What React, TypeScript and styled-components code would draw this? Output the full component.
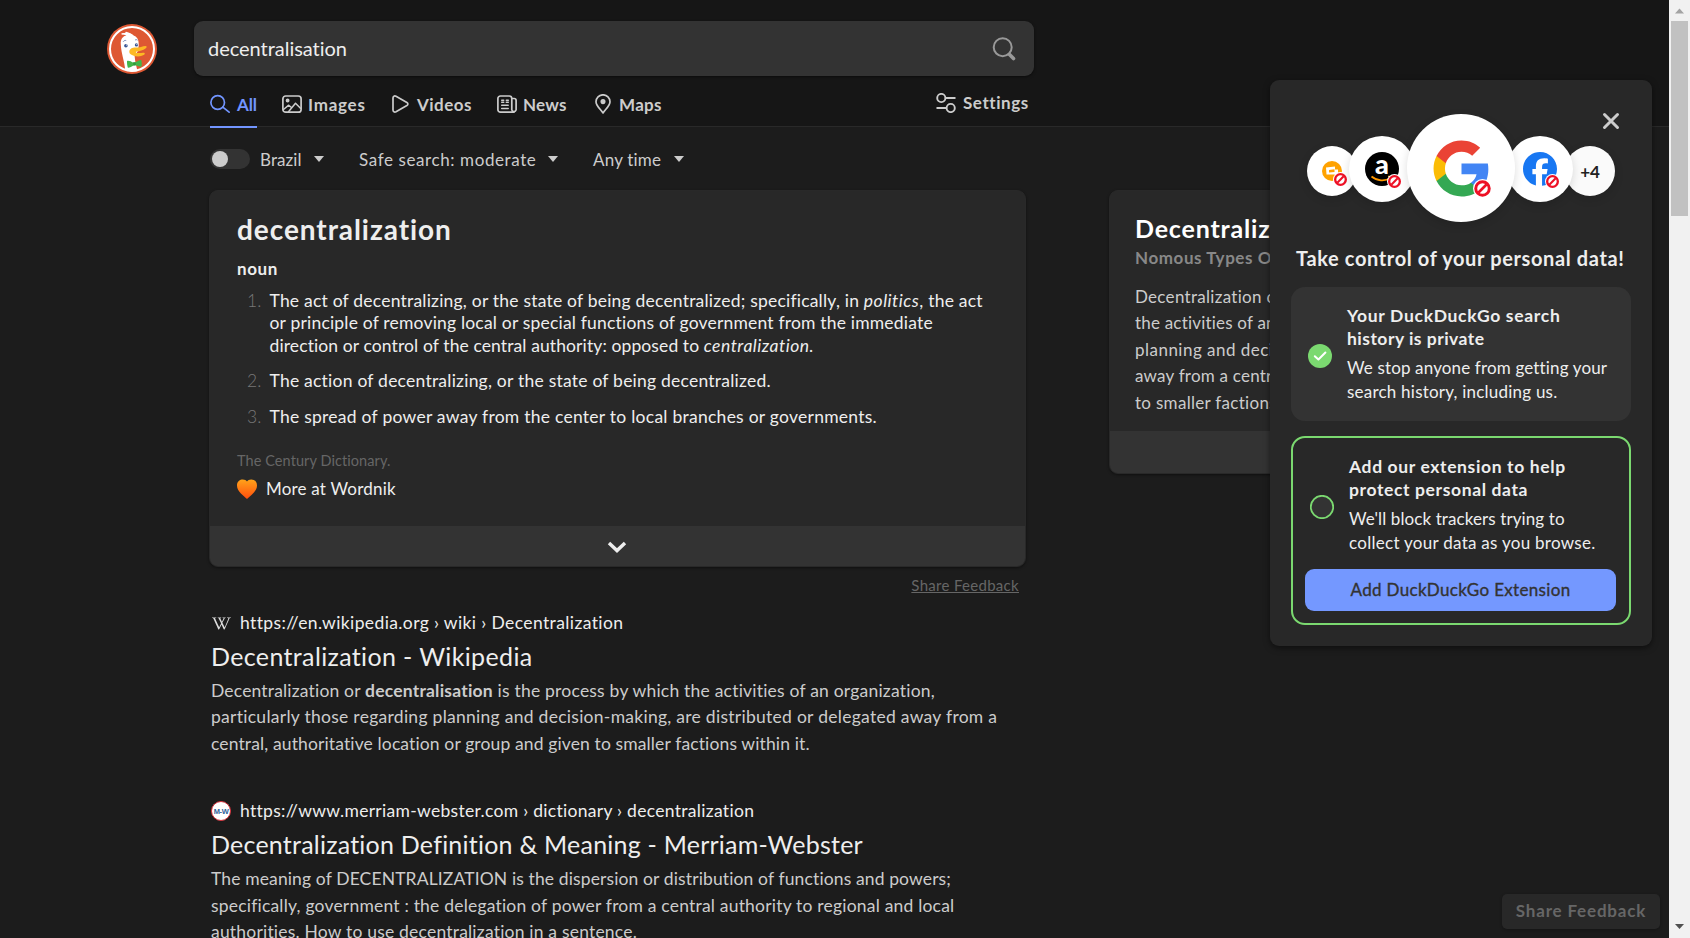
import React from "react";
import styled, { createGlobalStyle } from "styled-components";
import { FaFacebook } from "react-icons/fa6";
import { SiWikipedia } from "react-icons/si";

const GlobalStyle = createGlobalStyle`
  * { box-sizing: border-box; }
  body { margin: 0; background: #1c1c1c; overflow: hidden; }
  h1, h2, h3, p, ol { margin: 0; padding: 0; font-weight: inherit; }
`;

const Window = styled.div`
  display: grid;
  grid-template-columns: 1669px 21px;
  height: 938px;
  overflow: hidden;
  font-family: Lato, "Liberation Sans", sans-serif;
  color: #eee;
`;

const Page = styled.div`
  position: relative;
  height: 938px;
  overflow: hidden;
  background: #1c1c1c;
`;

const Line = styled.span<{ $ls?: number }>`
  display: block;
  white-space: nowrap;
  letter-spacing: ${(p) => p.$ls ?? 0}px;
  i { letter-spacing: 0.5px; }
`;

const Run = styled.span<{ $ls: number }>`
  letter-spacing: ${(p) => p.$ls}px;
`;

/* ---------- header ---------- */

const Header = styled.header`
  display: flex;
  height: 127px;
  padding-left: 107px;
  background: #161616;
  border-bottom: 1px solid #292929;
`;

const Logo = styled.div`
  width: 50px;
  height: 50px;
  margin-top: 24px;
  svg { display: block; }
`;

const HeaderMain = styled.div`
  width: 840px;
  margin-left: 37px;
  padding-top: 21px;
`;

const SearchBox = styled.div`
  display: flex;
  align-items: center;
  justify-content: space-between;
  height: 55px;
  padding: 0 18px 0 14px;
  border-radius: 9px;
  background: #333;
  box-shadow: 0 1px 3px rgba(0, 0, 0, 0.5);
  font-size: 20px;
  line-height: 24px;
  > span { margin-top: -2px; }
`;

const NavRow = styled.div`
  display: flex;
  justify-content: space-between;
  height: 50px;
  padding: 0 5px 0 16px;
`;

const Tabs = styled.nav`
  display: grid;
  grid-template-columns: 72px 110px 105px 98px 80px;
`;

const Tab = styled.a<{ $active?: boolean; $gap: number; $ls: number }>`
  position: relative;
  display: flex;
  align-items: flex-start;
  gap: ${(p) => p.$gap}px;
  padding-top: 18px;
  font-size: 17px;
  font-weight: 700;
  line-height: 21px;
  letter-spacing: ${(p) => p.$ls}px;
  color: ${(p) => (p.$active ? "#7295ff" : "#ccc")};
  svg { display: block; flex: none; }
  ${(p) => p.$active && `
    &::after {
      content: "";
      position: absolute;
      left: 0;
      bottom: -2px;
      width: 47px;
      height: 2px;
      background: #7295ff;
    }
  `}
`;

const Settings = styled.a`
  display: flex;
  gap: 7px;
  width: 93px;
  padding-top: 17px;
  font-size: 17px;
  font-weight: 700;
  line-height: 20px;
  letter-spacing: 0.56px;
  color: #ccc;
  svg { display: block; flex: none; }
`;

/* ---------- filters ---------- */

const Filters = styled.div`
  display: flex;
  align-items: center;
  height: 63px;
  padding: 3px 0 0 210px;
  font-size: 17px;
  line-height: 22px;
  color: #ccc;
`;

const Toggle = styled.span`
  width: 40px;
  height: 20px;
  margin: -3px 10px 0 0;
  padding: 2px;
  border-radius: 10px;
  background: #333;
  &::before {
    content: "";
    display: block;
    width: 16px;
    height: 16px;
    border-radius: 50%;
    background: #ccc;
  }
`;

const Filter = styled.span<{ $width: number; $ls: number }>`
  display: flex;
  justify-content: space-between;
  align-items: center;
  width: ${(p) => p.$width}px;
  letter-spacing: ${(p) => p.$ls}px;
  white-space: nowrap;
  &::after {
    content: "";
    margin-top: -2px;
    border: 4.5px solid transparent;
    border-width: 6px 5px 0;
    border-top-color: #ccc;
  }
  & + & { margin-left: 35px; }
`;

/* ---------- columns and cards ---------- */

const Columns = styled.div`
  display: flex;
  align-items: flex-start;
  padding-left: 209px;
`;

const MainColumn = styled.main`
  width: 817px;
`;

const SideColumn = styled.aside`
  margin-left: 83px;
`;

const Card = styled.section<{ $width: number; $height: number }>`
  display: flex;
  flex-direction: column;
  width: ${(p) => p.$width}px;
  height: ${(p) => p.$height}px;
  border: 1px solid #292929;
  border-radius: 9px;
  background: #282828;
  box-shadow: 0 1px 3px rgba(0, 0, 0, 0.45);
  overflow: hidden;
`;

const CardBar = styled.div<{ $height: number }>`
  display: flex;
  align-items: center;
  justify-content: center;
  height: ${(p) => p.$height}px;
  margin-top: auto;
  padding: 2px 1px 0 0;
  background: #333;
`;

const Definition = styled.div`
  padding: 21px 0 0 27px;
  font-size: 17.5px;
  h1 {
    font-size: 28px;
    font-weight: 700;
    line-height: 34px;
    letter-spacing: 0.93px;
  }
  h3 {
    margin-top: 12px;
    font-size: 17px;
    font-weight: 700;
    line-height: 22px;
    letter-spacing: 0.6px;
  }
`;

const Senses = styled.ol`
  margin-top: 10px;
  list-style: none;
  line-height: 22.4px;
`;

const Sense = styled.li`
  display: grid;
  grid-template-columns: 22.5px 1fr;
  padding-left: 10px;
  margin-bottom: 13.2px;
`;

const Num = styled.span`
  font-weight: 300;
  color: #777;
`;

const Attribution = styled.p`
  margin-top: 23px;
  font-size: 14.5px;
  line-height: 20px;
  letter-spacing: 0.08px;
  color: #666;
`;

const MoreLink = styled.a`
  display: flex;
  align-items: center;
  gap: 9px;
  margin-top: 7px;
  font-size: 17px;
  line-height: 22px;
  letter-spacing: 0.2px;
  svg { display: block; margin-top: -1px; }
`;

const InlineFeedback = styled.a`
  display: block;
  margin: 9px 7px 0 0;
  font-size: 15px;
  line-height: 19px;
  letter-spacing: 0.3px;
  text-align: right;
  text-decoration: underline;
  text-underline-offset: 1px;
  color: #666;
`;

const SideTopic = styled.div`
  padding: 22px 0 0 25px;
  h2 {
    font-size: 25px;
    font-weight: 700;
    line-height: 30px;
    letter-spacing: 0.82px;
    color: #fff;
  }
  h3 {
    margin-top: 4px;
    font-size: 17px;
    font-weight: 700;
    line-height: 22px;
    letter-spacing: 0.57px;
    color: #888;
  }
  p {
    margin-top: 15px;
    font-size: 17px;
    line-height: 26.4px;
    color: #ccc;
  }
`;

/* ---------- results ---------- */

const Result = styled.article<{ $top: number }>`
  margin-top: ${(p) => p.$top}px;
  padding-left: 2px;
  h2 {
    margin-top: 6px;
    font-size: 25px;
    line-height: 32px;
    color: #eee;
  }
  p {
    margin-top: 6px;
    font-size: 17.5px;
    line-height: 26.4px;
    color: #ccc;
  }
`;

const Url = styled.div`
  display: flex;
  align-items: center;
  gap: 9px;
  height: 22px;
  font-size: 17.5px;
  line-height: 22px;
`;

const Favicon = styled.span`
  display: flex;
  align-items: center;
  justify-content: center;
  width: 20px;
  height: 20px;
`;

const MerriamIcon = styled(Favicon)`
  border: 1.5px solid #d8303a;
  border-radius: 50%;
  background: #fff;
  font: 700 7.5px "Liberation Sans", sans-serif;
  letter-spacing: -0.4px;
  color: #2f6299;
`;

/* ---------- privacy popup ---------- */

const Popup = styled.aside`
  position: absolute;
  left: 1270px;
  top: 80px;
  width: 382px;
  height: 566px;
  padding: 34px 21px 0;
  border-radius: 9px;
  background: #282828;
  box-shadow: 0 2px 6px rgba(0, 0, 0, 0.5);
`;

const Close = styled.button`
  position: absolute;
  right: 32px;
  top: 32px;
  padding: 0;
  border: 0;
  background: none;
  svg { display: block; }
`;

const Trackers = styled.div`
  display: flex;
  align-items: center;
  justify-content: center;
  height: 108px;
`;

const Bubble = styled.div<{ $size: number; $lap: number; $z: number; $drop: number }>`
  position: relative;
  z-index: ${(p) => p.$z};
  display: flex;
  align-items: center;
  justify-content: center;
  flex: none;
  width: ${(p) => p.$size}px;
  height: ${(p) => p.$size}px;
  margin: ${(p) => p.$drop}px ${(p) => p.$lap}px 0 0;
  border-radius: 50%;
  background: ${(p) => (p.$z ? "#fff" : "#fafafa")};
  box-shadow: 0 3px 10px rgba(0, 0, 0, 0.14);
  font-size: 17px;
  font-weight: 700;
  color: #222;
  > svg { display: block; flex: none; }
`;

const Blocked = styled.span<{ $size: number; $x: number; $y: number }>`
  position: absolute;
  left: ${(p) => p.$x}px;
  top: ${(p) => p.$y}px;
  width: ${(p) => p.$size}px;
  height: ${(p) => p.$size}px;
  svg { display: block; width: 100%; height: 100%; }
`;

const PopupTitle = styled.h2`
  margin: 22px -10px 0;
  padding-left: 15px;
  font-size: 20px;
  font-weight: 700;
  line-height: 28px;
  letter-spacing: 0.63px;
  white-space: nowrap;
`;

const Step = styled.div<{ $outlined?: boolean }>`
  height: ${(p) => (p.$outlined ? 189 : 134)}px;
  margin-top: 15px;
  border-radius: 14px;
  border: ${(p) => (p.$outlined ? "2px solid #7bd970" : "0")};
  background: ${(p) => (p.$outlined ? "transparent" : "#333")};
  padding: 0 ${(p) => (p.$outlined ? 13 : 0)}px;
`;

const StepBody = styled.div<{ $pad: number; $left: number }>`
  display: flex;
  align-items: center;
  gap: 15px;
  padding: ${(p) => p.$pad}px 0 0 ${(p) => p.$left}px;
  font-size: 17px;
  line-height: 24px;
  svg { display: block; flex: none; margin-top: 3px; }
  h3 { font-size: 17.5px; font-weight: 700; line-height: 23.4px; margin-bottom: 5.2px; }
`;

const AddButton = styled.button`
  display: block;
  width: 311px;
  height: 42px;
  margin: 14px 0 0 -1px;
  padding: 0 0 2px;
  border: 0;
  border-radius: 9px;
  background: #7498ff;
  font: 400 17px Lato, sans-serif;
  -webkit-text-stroke: 0.35px #333;
  letter-spacing: 0.33px;
  color: #333;
`;

const FeedbackButton = styled.button`
  position: absolute;
  left: 1502px;
  top: 894px;
  width: 158px;
  height: 35px;
  padding: 0 0 2px;
  border: 0;
  border-radius: 5px;
  background: #282828;
  box-shadow: 0 1px 3px rgba(0, 0, 0, 0.3);
  font: 700 17px Lato, sans-serif;
  letter-spacing: 0.82px;
  color: #666;
`;

/* ---------- scrollbar ---------- */

const Scrollbar = styled.div`
  display: flex;
  flex-direction: column;
  align-items: center;
  height: 938px;
  background: #f1f1f1;
  svg { display: block; }
`;

const Thumb = styled.div`
  width: 17px;
  height: 195px;
  margin-bottom: auto;
  background: #c1c1c1;
`;

/* ---------- drawings ---------- */

const Duck = () => (
  <svg width="50" height="50" viewBox="0 0 50 50">
    <circle cx="25" cy="25" r="25" fill="#de5833" />
    <circle cx="25" cy="25" r="22" fill="none" stroke="#fff" strokeWidth="2" />
    <path d="M13.8 20.5C13.4 15 16 12.2 19.4 11.6c-1.400-.9-3-1.200-4.600-1C17 7.600 24.400 8.600 27 11.800c3.800 1.300 5 5 4.700 9.700L31 27l-3.400 5 .9 7 2 8c-4.200 1.200-9 .6-12.300-1.200-.8-9-4-16.300-4.400-25.300z" fill="#fff" />
    <path d="M15 9.800c2.500-.4 5 .5 7 2M19 8.400c2 .3 4 1.300 5.400 2.600" fill="none" stroke="#fff" strokeWidth="1.300" strokeLinecap="round" />
    <path d="M22.300 28c0-3 2.700-4.400 6.500-4.400 4 0 6.700-1.600 9.700-1.700 1.700 0 1.400 1.600 0 2.600-2.300 1.700-6 2.900-8.600 3.100-1.500.2-1.200 1.200.2 1.400 2.600.4 4.600-.5 6.700-.3 1.500.2 1.200 1.600-.2 2.400-2.600 1.600-6.800 1.800-9.900.6-2.400-.9-4.400-1.700-4.400-3.700z" fill="#fdb924" />
    <circle cx="18.900" cy="21.700" r="1.800" fill="#3a5795" />
    <circle cx="29.400" cy="20.900" r="1.600" fill="#3a5795" />
    <circle cx="19.500" cy="21.100" r=".5" fill="#fff" />
    <circle cx="29.900" cy="20.400" r=".5" fill="#fff" />
    <path d="M16.200 17.700c.8-1.200 2-1.500 3-1.100M28 16.200c.8-.7 1.700-.7 2.500-.1" fill="none" stroke="#6277ab" strokeWidth=".9" />
    <path d="M20 37c2-.6 4.300.6 6 1.600l2.500-.3c2-1.500 4.400-2.600 5.700-2.300.7 1.800.7 5 .3 6.700-1.700.1-4-.8-5.600-1.500l-2.500.3c-1.600 1.200-4 2.400-5.500 2.200-.8-2-1-4.700-.9-6.700z" fill="#43b649" />
    <path d="M26 38.600l2.500-.3.400 2.900-2.500.3z" fill="#2f9a3a" />
  </svg>
);

const GoogleMark = () => (
  <svg width="61" height="61" viewBox="0 0 24 24">
    <path fill="#4285f4" d="M22.560 12.250c0-.78-.07-1.530-.2-2.250H12v4.260h5.920c-.26 1.370-1.040 2.530-2.210 3.310v2.770h3.570c2.080-1.920 3.280-4.740 3.280-8.090z" />
    <path fill="#34a853" d="M12 23c2.970 0 5.460-.98 7.280-2.660l-3.570-2.770c-.98.66-2.230 1.060-3.710 1.060-2.860 0-5.290-1.930-6.160-4.530H2.180v2.840C3.990 20.530 7.700 23 12 23z" />
    <path fill="#fbbc05" d="M5.840 14.090c-.22-.66-.35-1.360-.35-2.090s.13-1.430.35-2.090V7.070H2.180C1.430 8.550 1 10.220 1 12s.43 3.450 1.180 4.930l3.660-2.840z" />
    <path fill="#ea4335" d="M12 5.380c1.620 0 3.060.56 4.210 1.640l3.150-3.150C17.450 2.090 14.970 1 12 1 7.700 1 3.990 3.470 2.180 7.070l3.660 2.840c.87-2.600 3.300-4.530 6.160-4.530z" />
  </svg>
);

const line = { fill: "none", stroke: "currentColor", strokeWidth: 1.7, strokeLinecap: "round", strokeLinejoin: "round" } as const;

const AllIcon = () => (
  <svg width="20" height="20" viewBox="0 0 20 20" {...line}>
    <circle cx="7.700" cy="8.500" r="6.800" />
    <path d="M12.800 13.200l6.300 5" />
  </svg>
);

const ImagesIcon = () => (
  <svg width="20" height="20" viewBox="0 0 20 20" {...line}>
    <rect x=".9" y="2" width="18.200" height="16.200" rx="2.800" />
    <circle cx="5.600" cy="6.500" r="1.100" fill="currentColor" />
    <path d="M1.500 15.500l5.200-4.300 3 2.600M6.700 17.500l6.800-8.300 5 5" strokeWidth="1.500" />
  </svg>
);

const VideosIcon = () => (
  <svg width="17" height="20" viewBox="0 0 17 20" {...line}>
    <path d="M1 4v12c0 1.700 1.500 2.500 3 1.700l10.900-6.200c1.300-.8 1.300-2.200 0-3L4 2.300C2.500 1.500 1 2.300 1 4z" />
  </svg>
);

const NewsIcon = () => (
  <svg width="20" height="20" viewBox="0 0 20 20" {...line}>
    <path d="M17 18.200H3.400A2.500 2.500 0 0 1 .9 15.700V4.500A2.500 2.500 0 0 1 3.400 2h8.900a2.500 2.500 0 0 1 2.500 2.500v11.400a2.200 2.200 0 0 0 4.300 0V6.500a2 2 0 0 0-2-2h-1.600" />
    <path d="M4.700 6.200h2M4.700 8.300h2M9.300 6.200h2M9.300 8.300h2M4.700 11.300h6.500M4.700 14.400h6.500" strokeWidth="1.500" />
  </svg>
);

const MapsIcon = () => (
  <svg width="16" height="20" viewBox="0 0 16 20" {...line}>
    <path d="M8 18.900C5.500 15.200 1 11.800 1 7.700a7 6.900 0 0 1 14 0c0 4.100-4.500 7.500-7 11.200z" />
    <circle cx="8" cy="7.600" r="1.700" fill="currentColor" />
  </svg>
);

const SettingsIcon = () => (
  <svg width="20" height="20" viewBox="0 0 20 20" {...line} strokeWidth={1.9}>
    <circle cx="5.300" cy="5" r="4.100" />
    <path d="M9.800 5h9M1.200 15h8.500" />
    <circle cx="14.700" cy="15" r="4.100" />
  </svg>
);

const SearchIcon = () => (
  <svg width="24" height="24" viewBox="0 0 24 24" fill="none" stroke="#999" strokeLinecap="round">
    <circle cx="10.700" cy="10.200" r="9" strokeWidth="2" />
    <path d="M17.500 17.500l4 4" strokeWidth="3.600" />
  </svg>
);

const NoSign = () => (
  <svg viewBox="0 0 18 18">
    <circle cx="9" cy="9" r="9" fill="#fff" />
    <circle cx="9" cy="9" r="6.400" fill="#fff" stroke="#ee1025" strokeWidth="2.800" />
    <path d="M5.200 12.800l7.600-7.600" stroke="#ee1025" strokeWidth="2.500" />
  </svg>
);

const AmazonMark = styled.span`
  display: flex;
  flex-direction: column;
  align-items: center;
  width: 34px;
  height: 34px;
  border-radius: 50%;
  background: #000;
  font: 900 27px Lato, sans-serif;
  line-height: 24px;
  color: #fff;
  svg { display: block; margin-top: -1px; }
`;

const Triangle = ({ up, color }: { up?: boolean; color: string }) => (
  <svg width="21" height="21" viewBox="0 0 21 21">
    <path d={up ? "M6 13.500h9l-4.500-5z" : "M6 7h9l-4.500 5z"} fill={color} />
  </svg>
);

export default function App() {
  return (
    <Window>
      <GlobalStyle />
      <Page>
        <Header>
          <Logo><Duck /></Logo>
          <HeaderMain>
            <SearchBox><Run $ls={-0.03}>decentralisation</Run><SearchIcon /></SearchBox>
            <NavRow>
              <Tabs>
                <Tab $active $gap={7} $ls={-0.1}><AllIcon />All</Tab>
                <Tab $gap={6} $ls={0.74}><ImagesIcon />Images</Tab>
                <Tab $gap={8} $ls={0.47}><VideosIcon />Videos</Tab>
                <Tab $gap={6} $ls={0.2}><NewsIcon />News</Tab>
                <Tab $gap={8} $ls={0.3}><MapsIcon />Maps</Tab>
              </Tabs>
              <Settings><SettingsIcon />Settings</Settings>
            </NavRow>
          </HeaderMain>
        </Header>

        <Filters>
          <Toggle />
          <Filter $width={64} $ls={0.08}>Brazil</Filter>
          <Filter $width={199} $ls={0.6}>Safe search: moderate</Filter>
          <Filter $width={91} $ls={0.2}>Any time</Filter>
        </Filters>

        <Columns>
          <MainColumn>
            <Card $width={817} $height={377}>
              <Definition>
                <h1>decentralization</h1>
                <h3>noun</h3>
                <Senses>
                  <Sense>
                    <Num>1.</Num>
                    <div>
                      <Line $ls={0.21}>The act of decentralizing, or the state of being decentralized; specifically, in <i>politics</i>, the act</Line>
                      <Line $ls={0.19}>or principle of removing local or special functions of government from the immediate</Line>
                      <Line $ls={0.105}>direction or control of the central authority: opposed to <i>centralization.</i></Line>
                    </div>
                  </Sense>
                  <Sense><Num>2.</Num><Line $ls={0.23}>The action of decentralizing, or the state of being decentralized.</Line></Sense>
                  <Sense><Num>3.</Num><Line $ls={0.256}>The spread of power away from the center to local branches or governments.</Line></Sense>
                </Senses>
                <Attribution>The Century Dictionary.</Attribution>
                <MoreLink>
                  <svg width="20" height="20" viewBox="0 0 20 20">
                    <defs>
                      <linearGradient id="heart" x1="0" y1="0" x2="0" y2="1">
                        <stop offset="0" stopColor="#ffa31a" />
                        <stop offset="1" stopColor="#ff4d0d" />
                      </linearGradient>
                    </defs>
                    <path d="M10 2.500C8.500-.6 0-.8 0 6.500c0 6 6.500 10 10 13.500 3.500-3.500 10-7.500 10-13.500C20-.8 11.500-.6 10 2.500z" fill="url(#heart)" />
                  </svg>
                  More at Wordnik
                </MoreLink>
              </Definition>
              <CardBar $height={40}>
                <svg width="20" height="14" viewBox="0 0 20 14" fill="none" stroke="#eee" strokeWidth="3.400">
                  <path d="M2 3l8 7.600L18 3" />
                </svg>
              </CardBar>
            </Card>
            <InlineFeedback>Share Feedback</InlineFeedback>

            <Result $top={17}>
              <Url>
                <Favicon><SiWikipedia size={19} color="#ddd" /></Favicon>
                <Line $ls={0.386}>https://en.wikipedia.org › wiki › Decentralization</Line>
              </Url>
              <h2><Line $ls={0.36}>Decentralization - Wikipedia</Line></h2>
              <p>
                <Line $ls={0.21}><Run $ls={0.17}>Decentralization or </Run><b>decentralisation</b> is the process by which the activities of an organization,</Line>
                <Line $ls={0.276}>particularly those regarding planning and decision-making, are distributed or delegated away from a</Line>
                <Line $ls={0.126}>central, authoritative location or group and given to smaller factions within it.</Line>
              </p>
            </Result>

            <Result $top={43}>
              <Url>
                <MerriamIcon>M-W</MerriamIcon>
                <Line $ls={0.3}>https://www.merriam-webster.com › dictionary › decentralization</Line>
              </Url>
              <h2><Line $ls={0.225}>Decentralization Definition &amp; Meaning - Merriam-Webster</Line></h2>
              <p>
                <Line $ls={0.125}>The meaning of DECENTRALIZATION is the dispersion or distribution of functions and powers;</Line>
                <Line $ls={0.197}>specifically, government : the delegation of power from a central authority to regional and local</Line>
                <Line $ls={0.2}>authorities. How to use decentralization in a sentence.</Line>
              </p>
            </Result>
          </MainColumn>

          <SideColumn>
            <Card $width={391} $height={284}>
              <SideTopic>
                <h2>Decentralization</h2>
                <h3>Nomous Types Of</h3>
                <p>
                  <Line $ls={0.29}>Decentralization or</Line>
                  <Line $ls={0.2}>the activities of an</Line>
                  <Line $ls={0.48}>planning and decision</Line>
                  <Line $ls={0.22}>away from a central,</Line>
                  <Line $ls={0.3}>to smaller factions</Line>
                </p>
              </SideTopic>
              <CardBar $height={42} />
            </Card>
          </SideColumn>
        </Columns>

        <Popup>
          <Close aria-label="Close">
            <svg width="18" height="18" viewBox="0 0 18 18" stroke="#ccc" strokeWidth="3" strokeLinecap="round">
              <path d="M2.500 2.500l13 13M15.500 2.500l-13 13" />
            </svg>
          </Close>
          <Trackers>
            <Bubble $size={50} $lap={-8} $z={1} $drop={6}>
              <svg width="20" height="20" viewBox="0 0 20 20">
                <circle cx="10" cy="10" r="10" fill="#ffa200" />
                <path d="M4 6.500l9-1v3h3v5H4.500z" fill="#fff" />
                <path d="M7 9l5.500-.7v2.600L7 11.500z" fill="#ffa200" />
              </svg>
              <Blocked $size={15} $x={26} $y={26}><NoSign /></Blocked>
            </Bubble>
            <Bubble $size={66} $lap={-8} $z={2} $drop={2}>
              <AmazonMark>
                a
                <svg width="24" height="8" viewBox="0 0 24 8" fill="none" stroke="#ff9900" strokeWidth="1.700">
                  <path d="M1.500 1.500c5.500 4.600 13.500 5 19 1.500M18 1.500l4 0-1.300 4" />
                </svg>
              </AmazonMark>
              <Blocked $size={15} $x={38} $y={38}><NoSign /></Blocked>
            </Bubble>
            <Bubble $size={108} $lap={-8} $z={3} $drop={0}>
              <GoogleMark />
              <Blocked $size={19} $x={65.5} $y={65}><NoSign /></Blocked>
            </Bubble>
            <Bubble $size={66} $lap={-8} $z={2} $drop={2}>
              <FaFacebook size={34} color="#1877f2" />
              <Blocked $size={15} $x={38} $y={38}><NoSign /></Blocked>
            </Bubble>
            <Bubble $size={50} $lap={0} $z={0} $drop={6}>+4</Bubble>
          </Trackers>
          <PopupTitle>Take control of your personal data!</PopupTitle>
          <Step>
            <StepBody $pad={17} $left={17}>
              <svg width="24" height="24" viewBox="0 0 24 24">
                <circle cx="12" cy="12" r="12" fill="#7bd970" />
                <path d="M6.800 12.200l3.600 3.300 7-7" fill="none" stroke="#fff" strokeWidth="2" strokeLinecap="round" strokeLinejoin="round" />
              </svg>
              <div>
                <h3>
                  <Line $ls={0.68}>Your DuckDuckGo search</Line>
                  <Line $ls={0.48}>history is private</Line>
                </h3>
                <Line $ls={0.15}>We stop anyone from getting your</Line>
                <Line $ls={0.22}>search history, including us.</Line>
              </div>
            </StepBody>
          </Step>
          <Step $outlined>
            <StepBody $pad={17} $left={4}>
              <svg width="24" height="24" viewBox="0 0 24 24">
                <circle cx="12" cy="12" r="11.200" fill="#333" stroke="#7bd970" strokeWidth="1.800" />
              </svg>
              <div>
                <h3>
                  <Line $ls={0.63}>Add our extension to help</Line>
                  <Line $ls={0.62}>protect personal data</Line>
                </h3>
                <Line $ls={0.1}>We'll block trackers trying to</Line>
                <Line $ls={0.28}>collect your data as you browse.</Line>
              </div>
            </StepBody>
            <AddButton>Add DuckDuckGo Extension</AddButton>
          </Step>
        </Popup>

        <FeedbackButton>Share Feedback</FeedbackButton>
      </Page>
      <Scrollbar>
        <Triangle up color="#a3a3a3" />
        <Thumb />
        <Triangle color="#505050" />
      </Scrollbar>
    </Window>
  );
}
